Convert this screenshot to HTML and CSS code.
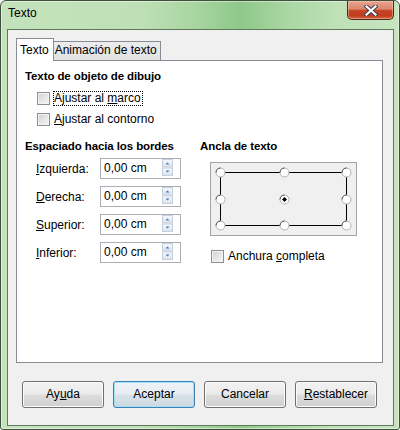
FILE: index.html
```html
<!DOCTYPE html>
<html lang="es">
<head>
<meta charset="utf-8">
<title>Texto</title>
<link rel="stylesheet" href="styles.css">
</head>
<body>
<div class="window">
  <div class="titlebar">
    <span class="title">Texto</span>
    <div class="close">
      <svg width="14" height="11" viewBox="0 0 14 11">
        <path d="M2.5 1.5 L11.5 9.5 M11.5 1.5 L2.5 9.5" stroke="#3a3f4a" stroke-width="4.2" stroke-linecap="square" fill="none"/>
        <path d="M2.5 1.5 L11.5 9.5 M11.5 1.5 L2.5 9.5" stroke="#ffffff" stroke-width="2.2" stroke-linecap="square" fill="none"/>
      </svg>
    </div>
  </div>
  <div class="client">
    <div class="tabs">
      <div class="tab active">Texto</div>
      <div class="tab">Animación de texto</div>
    </div>
    <div class="panel">
      <div class="heading">Texto de objeto de dibujo</div>
      <div class="checks">
        <div class="check indent"><span class="box"></span><span class="lbl focus">Ajustar al <u>m</u>arco</span></div>
        <div class="check indent"><span class="box"></span><span class="lbl"><u>A</u>justar al contorno</span></div>
      </div>
      <div class="columns">
        <div class="col-left">
          <div class="heading">Espaciado hacia los bordes</div>
          <div class="spins">
            <div class="spin-row"><span class="spin-label"><u>I</u>zquierda:</span><div class="spin"><span class="val">0,00 cm</span><svg class="arrows" width="11" height="17" viewBox="0 0 11 17"><defs><linearGradient id="g1" x1="0" y1="0" x2="0" y2="1"><stop offset="0" stop-color="#f6f9fc"/><stop offset="1" stop-color="#dae3ee"/></linearGradient></defs><rect x="0.5" y="0.5" width="10" height="7.5" fill="url(#g1)" stroke="#c6d0dc"/><rect x="0.5" y="9" width="10" height="7.5" fill="url(#g1)" stroke="#c6d0dc"/><path d="M3.5 5.5 L7.5 5.5 L5.5 3.5 Z" fill="#4a78b4"/><path d="M3.5 11.5 L7.5 11.5 L5.5 13.5 Z" fill="#4a78b4"/></svg></div></div>
            <div class="spin-row"><span class="spin-label"><u>D</u>erecha:</span><div class="spin"><span class="val">0,00 cm</span><svg class="arrows" width="11" height="17" viewBox="0 0 11 17"><rect x="0.5" y="0.5" width="10" height="7.5" fill="url(#g1)" stroke="#c6d0dc"/><rect x="0.5" y="9" width="10" height="7.5" fill="url(#g1)" stroke="#c6d0dc"/><path d="M3.5 5.5 L7.5 5.5 L5.5 3.5 Z" fill="#4a78b4"/><path d="M3.5 11.5 L7.5 11.5 L5.5 13.5 Z" fill="#4a78b4"/></svg></div></div>
            <div class="spin-row"><span class="spin-label"><u>S</u>uperior:</span><div class="spin"><span class="val">0,00 cm</span><svg class="arrows" width="11" height="17" viewBox="0 0 11 17"><rect x="0.5" y="0.5" width="10" height="7.5" fill="url(#g1)" stroke="#c6d0dc"/><rect x="0.5" y="9" width="10" height="7.5" fill="url(#g1)" stroke="#c6d0dc"/><path d="M3.5 5.5 L7.5 5.5 L5.5 3.5 Z" fill="#4a78b4"/><path d="M3.5 11.5 L7.5 11.5 L5.5 13.5 Z" fill="#4a78b4"/></svg></div></div>
            <div class="spin-row"><span class="spin-label"><u>I</u>nferior:</span><div class="spin"><span class="val">0,00 cm</span><svg class="arrows" width="11" height="17" viewBox="0 0 11 17"><rect x="0.5" y="0.5" width="10" height="7.5" fill="url(#g1)" stroke="#c6d0dc"/><rect x="0.5" y="9" width="10" height="7.5" fill="url(#g1)" stroke="#c6d0dc"/><path d="M3.5 5.5 L7.5 5.5 L5.5 3.5 Z" fill="#4a78b4"/><path d="M3.5 11.5 L7.5 11.5 L5.5 13.5 Z" fill="#4a78b4"/></svg></div></div>
          </div>
        </div>
        <div class="col-right">
          <div class="heading">Ancla de texto</div>
          <div class="anchor">
            <svg width="145" height="72" viewBox="0 0 145 72">
              <path d="M9.5 9.5 H135.5 V62.5 H9.5 Z" fill="none" stroke="#000" stroke-width="1"/>
              <g fill="#fff" stroke="#b0b0b0" stroke-width="1">
                <circle cx="9.5" cy="9.5" r="4.5"/>
                <circle cx="73.5" cy="9.5" r="4.5"/>
                <circle cx="135.5" cy="9.5" r="4.5"/>
                <circle cx="9.5" cy="36.5" r="4.5"/>
                <circle cx="73.5" cy="36.5" r="4.5"/>
                <circle cx="135.5" cy="36.5" r="4.5"/>
                <circle cx="9.5" cy="62.5" r="4.5"/>
                <circle cx="73.5" cy="62.5" r="4.5"/>
                <circle cx="135.5" cy="62.5" r="4.5"/>
              </g>
              <g fill="none" stroke="#555" stroke-width="1">
                <path d="M5 9.5 A4.5 4.5 0 0 1 9.5 5"/>
                <path d="M69 9.5 A4.5 4.5 0 0 1 73.5 5"/>
                <path d="M131 9.5 A4.5 4.5 0 0 1 135.5 5"/>
                <path d="M5 36.5 A4.5 4.5 0 0 1 9.5 32"/>
                <path d="M69 36.5 A4.5 4.5 0 0 1 73.5 32"/>
                <path d="M131 36.5 A4.5 4.5 0 0 1 135.5 32"/>
                <path d="M5 62.5 A4.5 4.5 0 0 1 9.5 58"/>
                <path d="M69 62.5 A4.5 4.5 0 0 1 73.5 58"/>
                <path d="M131 62.5 A4.5 4.5 0 0 1 135.5 58"/>
              </g>
              <path d="M73.5 34 L76 36.5 L73.5 39 L71 36.5 Z" fill="#000"/>
            </svg>
          </div>
          <div class="check indent-r"><span class="box"></span><span class="lbl">Anchura <u>c</u>ompleta</span></div>
        </div>
      </div>
    </div>
    <div class="buttons">
      <div class="btn">Ay<u>u</u>da</div>
      <div class="btn default">Aceptar</div>
      <div class="btn">Cancelar</div>
      <div class="btn"><u>R</u>establecer</div>
    </div>
  </div>
</div>
</body>
</html>
```

FILE: styles.css
```css
* { box-sizing: border-box; }
html, body { margin: 0; padding: 0; }
body {
  width: 400px;
  height: 430px;
  overflow: hidden;
  background: #ffffff;
  font-family: "Liberation Sans", Arial, sans-serif;
  font-size: 12px;
  color: #000;
}
u { text-decoration: underline; text-underline-offset: 1px; }

.window {
  width: 400px;
  height: 430px;
  border: 1px solid #3e4f3c;
  border-radius: 6px 6px 3px 3px;
  background: linear-gradient(90deg, #c4e3bc 0%, #bfe0b6 35%, #a6d49f 50%, #8fc889 60%, #a9d7a3 72%, #c0e1b8 85%, #c6e4be 100%);
  box-shadow: inset 0 0 0 1px rgba(255, 255, 255, 0.45);
  display: flex;
  flex-direction: column;
}

.titlebar {
  height: 28px;
  flex: 0 0 28px;
  display: flex;
  align-items: flex-start;
  padding: 0 5px 0 7px;
}
.title { margin-top: 5px; line-height: 15px; }

.close {
  margin-left: auto;
  width: 47px;
  height: 19px;
  border: 1px solid #4a2a22;
  border-top: none;
  border-radius: 0 0 5px 5px;
  background: linear-gradient(#e8a591 0%, #dc866c 45%, #c6462a 52%, #c03c1c 80%, #d6663e 100%);
  box-shadow: inset 0 0 0 1px rgba(255, 210, 190, 0.45);
  display: flex;
  align-items: center;
  justify-content: center;
}

.client {
  flex: 1;
  margin: 0 5px 3px 6px;
  background: #f0f0f0;
  border: 1px solid #5f7a5b;
  padding: 8px 10px 0 8px;
  display: flex;
  flex-direction: column;
}

.tabs {
  height: 22px;
  display: flex;
  align-items: flex-end;
}
.tab {
  border: 1px solid #898c95;
  border-bottom: none;
  line-height: 15px;
  white-space: nowrap;
}
.tab.active {
  position: relative;
  z-index: 1;
  height: 23px;
  margin-bottom: -1px;
  padding: 4px 4px 0 3px;
  background: #ffffff;
}
.tab:not(.active) {
  height: 19px;
  margin-left: -1px;
  padding: 1px 3px 0 1px;
  background: linear-gradient(#ececec, #e2e2e2);
}

.panel {
  height: 303px;
  flex: 0 0 303px;
  background: #ffffff;
  border: 1px solid #898c95;
  padding: 8px;
}

.heading {
  font-weight: bold;
  font-size: 11.5px;
  letter-spacing: -0.1px;
  line-height: 15px;
  white-space: nowrap;
}

.checks { margin-top: 4px; }
.check {
  height: 21px;
  display: flex;
  align-items: center;
}
.check.indent { padding-left: 12px; }
.check.indent-r { padding-left: 11px; margin-top: 10px; }
.box {
  width: 13px;
  height: 13px;
  flex: 0 0 13px;
  border: 1px solid #8e8f8f;
  background: linear-gradient(135deg, #cdd0d4 0%, #e4e5e7 50%, #f6f6f6 100%);
  box-shadow: inset 0 0 0 1px #f4f4f4;
  margin-right: 3px;
}
.lbl {
  border: 1px dotted transparent;
  padding: 0 1px 0 0;
  line-height: 13px;
}
.lbl.focus { border-color: #000; }

.columns {
  margin-top: 9px;
  display: grid;
  grid-template-columns: 175px 1fr;
}

.spins {
  margin-top: 4px;
  display: flex;
  flex-direction: column;
  gap: 7px;
}
.spin-row {
  height: 21px;
  display: flex;
  align-items: center;
  padding-left: 11px;
}
.spin-label { width: 64px; flex: 0 0 64px; }
.spin {
  width: 81px;
  height: 21px;
  border: 1px solid #abadb3;
  background: #fff;
  display: flex;
  align-items: flex-start;
}
.val {
  flex: 1;
  padding-left: 3px;
  line-height: 19px;
}
.arrows { margin-right: 7px; display: block; }

.anchor {
  margin-top: 8px;
  margin-left: 10px;
  width: 147px;
  height: 74px;
  border: 1px solid #a3a3a3;
  background: #f0f0f0;
}
.anchor svg { display: block; }

.buttons {
  margin-top: 18px;
  padding-left: 6px;
  display: flex;
  gap: 9px;
}
.btn {
  width: 82px;
  height: 27px;
  border: 1px solid #707070;
  border-radius: 3px;
  background: linear-gradient(#f2f2f2 0%, #ebebeb 48%, #dddddd 52%, #cfcfcf 100%);
  box-shadow: inset 0 0 0 1px #fbfbfb;
  display: flex;
  align-items: center;
  justify-content: center;
  line-height: 15px;
}
.btn.default {
  border-color: #3c7fb1;
  background: linear-gradient(#eef3f6 0%, #e6edf2 48%, #d8e2e9 52%, #cdd8e0 100%);
  box-shadow: inset 0 0 0 1px #9fe2fa;
}
```
